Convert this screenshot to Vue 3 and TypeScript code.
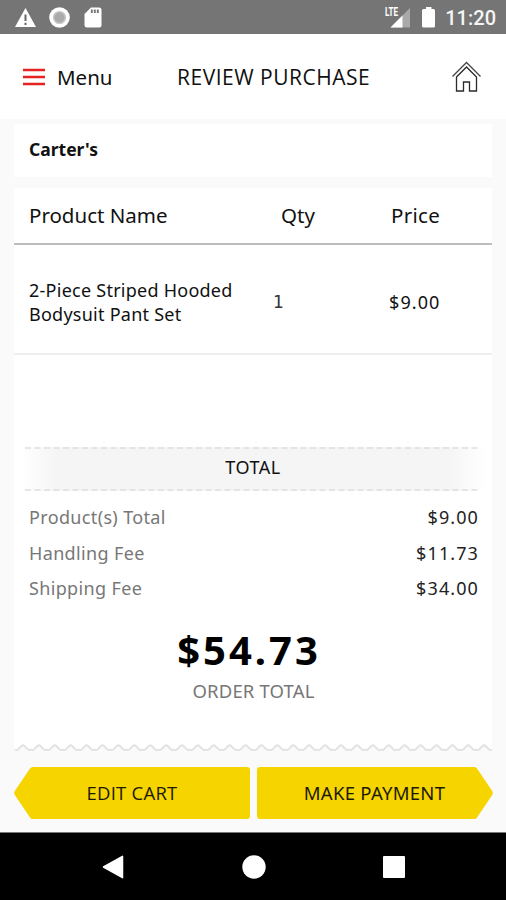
<script setup lang="ts">
interface Fee {
  label: string
  amount: string
}

const fees: Fee[] = [
  { label: 'Product(s) Total', amount: '$9.00' },
  { label: 'Handling Fee', amount: '$11.73' },
  { label: 'Shipping Fee', amount: '$34.00' },
]

const product = { name: '2-Piece Striped Hooded Bodysuit Pant Set', qty: 1, price: '$9.00' }

// Torn receipt edge: a repeating wave, 16px per tooth
const teeth = Array.from({ length: 30 }, () => 'q1.500 1 3 0 l3.500 -3.500 q1.500 -1.500 3 0 l3.500 3.500 q1.500 1 2.900 0').join(' ')
const edgeLine = `M1 5.5 ${teeth}`
const edgeFill = `M0 0 V5.5 H1 ${teeth} V0 Z`
</script>

<template>
  <div class="screen">
    <div class="status">
      <svg class="status-left" width="90" height="24" viewBox="0 0 90 24">
        <path d="M11.5 3 L22 22 H1 Z" fill="#fff" />
        <path d="M11.5 9.5 V16 M11.5 17.8 V20" stroke="#666" stroke-width="2" />
        <circle cx="45.5" cy="12.5" r="10.3" fill="#fff" />
        <circle cx="45.5" cy="12.5" r="5.8" fill="#aaa" stroke="#c4c4c4" stroke-width="1.5" />
        <path d="M77 2.5 H85 Q87.5 2.5 87.5 5 V20 Q87.5 22.5 85 22.5 H73 Q70.5 22.5 70.5 20 V9 Z" fill="#fff" />
        <path d="M77.8 4.5 V8 M80.8 4.5 V8 M83.8 4.5 V8" stroke="#777" stroke-width="1.9" />
      </svg>
      <div class="status-right">
        <svg width="52" height="24" viewBox="0 0 52 24">
          <text class="lte" x="1" y="11" textLength="13" lengthAdjust="spacingAndGlyphs">LTE</text>
          <path d="M26 3 V22.5 H6.5 Z" fill="#a9a9a9" />
          <path d="M18.500 10.500 V22.500 H6.500 Z" fill="#fff" />
          <path d="M42 2 H47.500 V4 H49.500 Q51 4 51 5.5 V21 Q51 22.500 49.500 22.500 H39.500 Q38 22.500 38 21 V5.5 Q38 4 39.500 4 H42 Z" fill="#fff" />
        </svg>
        <span class="clock">11:20</span>
      </div>
    </div>

    <header class="header">
      <div class="menu">
        <svg width="22" height="18" viewBox="0 0 22 18">
          <path d="M0 2 H22 M0 9 H22 M0 16 H22" stroke="#e62323" stroke-width="2.6" />
        </svg>
        <span>Menu</span>
      </div>
      <h1 class="title">REVIEW PURCHASE</h1>
      <svg class="home" width="30" height="32" viewBox="0 0 30 32" fill="none" stroke-width="1.300">
        <path d="M1.500 15.500 L15.500 1.500 L29.500 15.500" stroke="#444" />
        <path d="M5.500 16 L15.500 6 L25.500 16 V30 H18.500 V21 H12.500 V30 H5.500 Z" stroke="#2a2a2a" />
      </svg>
    </header>

    <main class="content">
      <section class="store">Carter's</section>

      <section class="receipt">
        <div class="row head">
          <span>Product Name</span>
          <span class="head-qty">Qty</span>
          <span class="head-price">Price</span>
        </div>
        <div class="row item">
          <span class="name">{{ product.name }}</span>
          <span class="qty">{{ product.qty }}</span>
          <span class="price">{{ product.price }}</span>
        </div>

        <div class="total-band">
          <svg class="dash" width="456" height="2"><path d="M0 1 H456" /></svg>
          <span>TOTAL</span>
          <svg class="dash" width="456" height="2"><path d="M0 1 H456" /></svg>
        </div>

        <div class="fees">
          <div v-for="fee in fees" :key="fee.label" class="fee">
            <span class="fee-label">{{ fee.label }}</span>
            <span class="fee-amount">{{ fee.amount }}</span>
          </div>
        </div>

        <div class="grand">$54.73</div>
        <div class="grand-label">ORDER TOTAL</div>
      </section>

      <svg class="edge" width="478" height="8" viewBox="0 0 478 8">
        <path :d="edgeFill" fill="#fff" />
        <path :d="edgeLine" fill="none" stroke="#e2e2e2" stroke-width="1.8" />
      </svg>

      <div class="actions">
        <button class="action">
          <svg class="shape" width="236" height="52" viewBox="0 0 236 52">
            <path d="M18.5 0 H233 Q236 0 236 3 V49 Q236 52 233 52 H18.5 Q17 52 16 50.5 L0.8 28 Q-0.5 26 0.8 24 L16 1.5 Q17 0 18.5 0 Z" fill="#f5d400" />
          </svg>
          <span class="edit">EDIT CART</span>
        </button>
        <button class="action">
          <svg class="shape" width="236" height="52" viewBox="0 0 236 52">
            <path d="M217.500 0 H3 Q0 0 0 3 V49 Q0 52 3 52 H217.500 Q219 52 220 50.5 L235.200 28 Q236.500 26 235.200 24 L220 1.5 Q219 0 217.500 0 Z" fill="#f5d400" />
          </svg>
          <span class="pay">MAKE PAYMENT</span>
        </button>
      </div>
    </main>

    <nav class="nav">
      <svg width="22" height="24" viewBox="0 0 22 24"><path d="M20.500 1.300 V22.700 L1.500 12 Z" fill="#fff" stroke="#fff" stroke-width="1.5" stroke-linejoin="round" /></svg>
      <svg width="24" height="24" viewBox="0 0 24 24"><circle cx="12" cy="12" r="11.7" fill="#fff" /></svg>
      <svg width="22" height="22" viewBox="0 0 22 22"><rect width="22" height="22" rx="1" fill="#fff" /></svg>
    </nav>
  </div>
</template>

<style>
body {
  margin: 0;
}
</style>

<style scoped>
.screen {
  width: 506px;
  height: 900px;
  display: flex;
  flex-direction: column;
  overflow: hidden;
  background: #fafafa;
  color: #111;
  font-family: 'Noto Sans', 'Open Sans', sans-serif;
}
.screen svg {
  display: block;
  flex: none;
}
.status {
  box-sizing: border-box;
  height: 34px;
  flex: none;
  padding: 5px 10px 0 14px;
  display: flex;
  justify-content: space-between;
  background: #757575;
}
.status-right {
  display: flex;
  gap: 9px;
}
.lte {
  font: bold 12px Roboto, sans-serif;
  fill: #fff;
}
.clock {
  font: 500 20px/26px Roboto, sans-serif;
  color: #f5f5f5;
}
.header {
  box-sizing: border-box;
  height: 85px;
  flex: none;
  padding: 0 25px 0 23px;
  display: grid;
  grid-template-columns: 154px 1fr 30px;
  align-items: center;
  background: #fff;
}
.menu {
  display: flex;
  align-items: center;
  gap: 12px;
  font-size: 20.500px;
}
.title {
  margin: 0;
  font: 400 21px 'Open Sans', sans-serif;
  letter-spacing: 0.5px;
  white-space: nowrap;
}
.content {
  box-sizing: border-box;
  display: flex;
  flex-direction: column;
  height: 713px;
  flex: none;
  padding: 5px 14px 0;
}
.store {
  height: 53px;
  padding-left: 15px;
  line-height: 51px;
  font-size: 17.500px;
  font-weight: 700;
  background: #fff;
}
.receipt {
  height: 556px;
  margin-top: 11px;
  background: #fff;
}
.row {
  box-sizing: border-box;
  display: grid;
  align-items: center;
  padding-left: 15px;
}
.head {
  grid-template-columns: 252px 110px 1fr;
  height: 57px;
  padding-bottom: 2px;
  border-bottom: 2px solid #bdbdbd;
  font-size: 20.500px;
}
.head-price {
  letter-spacing: 0.3px;
}
.item {
  grid-template-columns: 244px 116px 1fr;
  height: 110px;
  padding-top: 6px;
  border-bottom: 2px solid #eee;
  font-size: 18px;
}
.name {
  width: 215px;
  line-height: 24.500px;
  letter-spacing: 0.25px;
}
.qty {
  font-family: 'DejaVu Sans', sans-serif;
  font-size: 17px;
  color: #333;
}
.price {
  letter-spacing: 1.1px;
}
.total-band {
  height: 44px;
  margin: 92px 6px 0;
  display: flex;
  flex-direction: column;
  align-items: center;
  justify-content: space-between;
  background: linear-gradient(90deg, #fff, #f5f5f5 8%, #f5f5f5 92%, #fff);
  font-size: 18px;
  letter-spacing: 0.5px;
}
.total-band span {
  height: 40px;
  line-height: 37px;
}
.dash path {
  stroke: #dedede;
  stroke-width: 1.5;
  stroke-dasharray: 6 3.500;
}
.fees {
  padding: 9px 13px 0 15px;
}
.fee {
  display: flex;
  justify-content: space-between;
  height: 35.500px;
  line-height: 35.500px;
  font-size: 18px;
}
.fee-label {
  color: #777;
  letter-spacing: 0.35px;
}
.fee-amount {
  letter-spacing: 1.1px;
  color: #222;
}
.grand {
  margin-top: 16px;
  height: 54px;
  line-height: 54px;
  padding-right: 8px;
  text-align: center;
  font-size: 40px;
  font-weight: 700;
  letter-spacing: 3px;
  color: #000;
}
.grand-label {
  height: 27px;
  line-height: 28px;
  text-align: center;
  padding-left: 1px;
  font-size: 18.500px;
  letter-spacing: 0.15px;
  color: #777;
}
.edge {
  width: 478px;
}
.actions {
  display: flex;
  gap: 7px;
  margin-top: 15px;
}
.action {
  display: grid;
  place-items: center;
  width: 236px;
  height: 52px;
  padding: 0;
  border: 0;
  background: none;
  font: 400 18.500px 'Noto Sans', sans-serif;
  color: #1c1a00;
}
.action > * {
  grid-area: 1 / 1;
}
.edit {
  padding-bottom: 2px;
  font-family: 'Open Sans', sans-serif;
  letter-spacing: 0.25px;
}
.pay {
  letter-spacing: 0.3px;
  padding: 0 1px 2px 0;
}
.nav {
  box-sizing: border-box;
  height: 68px;
  flex: none;
  border-top: 1px solid #777;
  display: flex;
  align-items: center;
  justify-content: space-between;
  padding: 0 101px 0 102px;
  background: #000;
}
</style>
